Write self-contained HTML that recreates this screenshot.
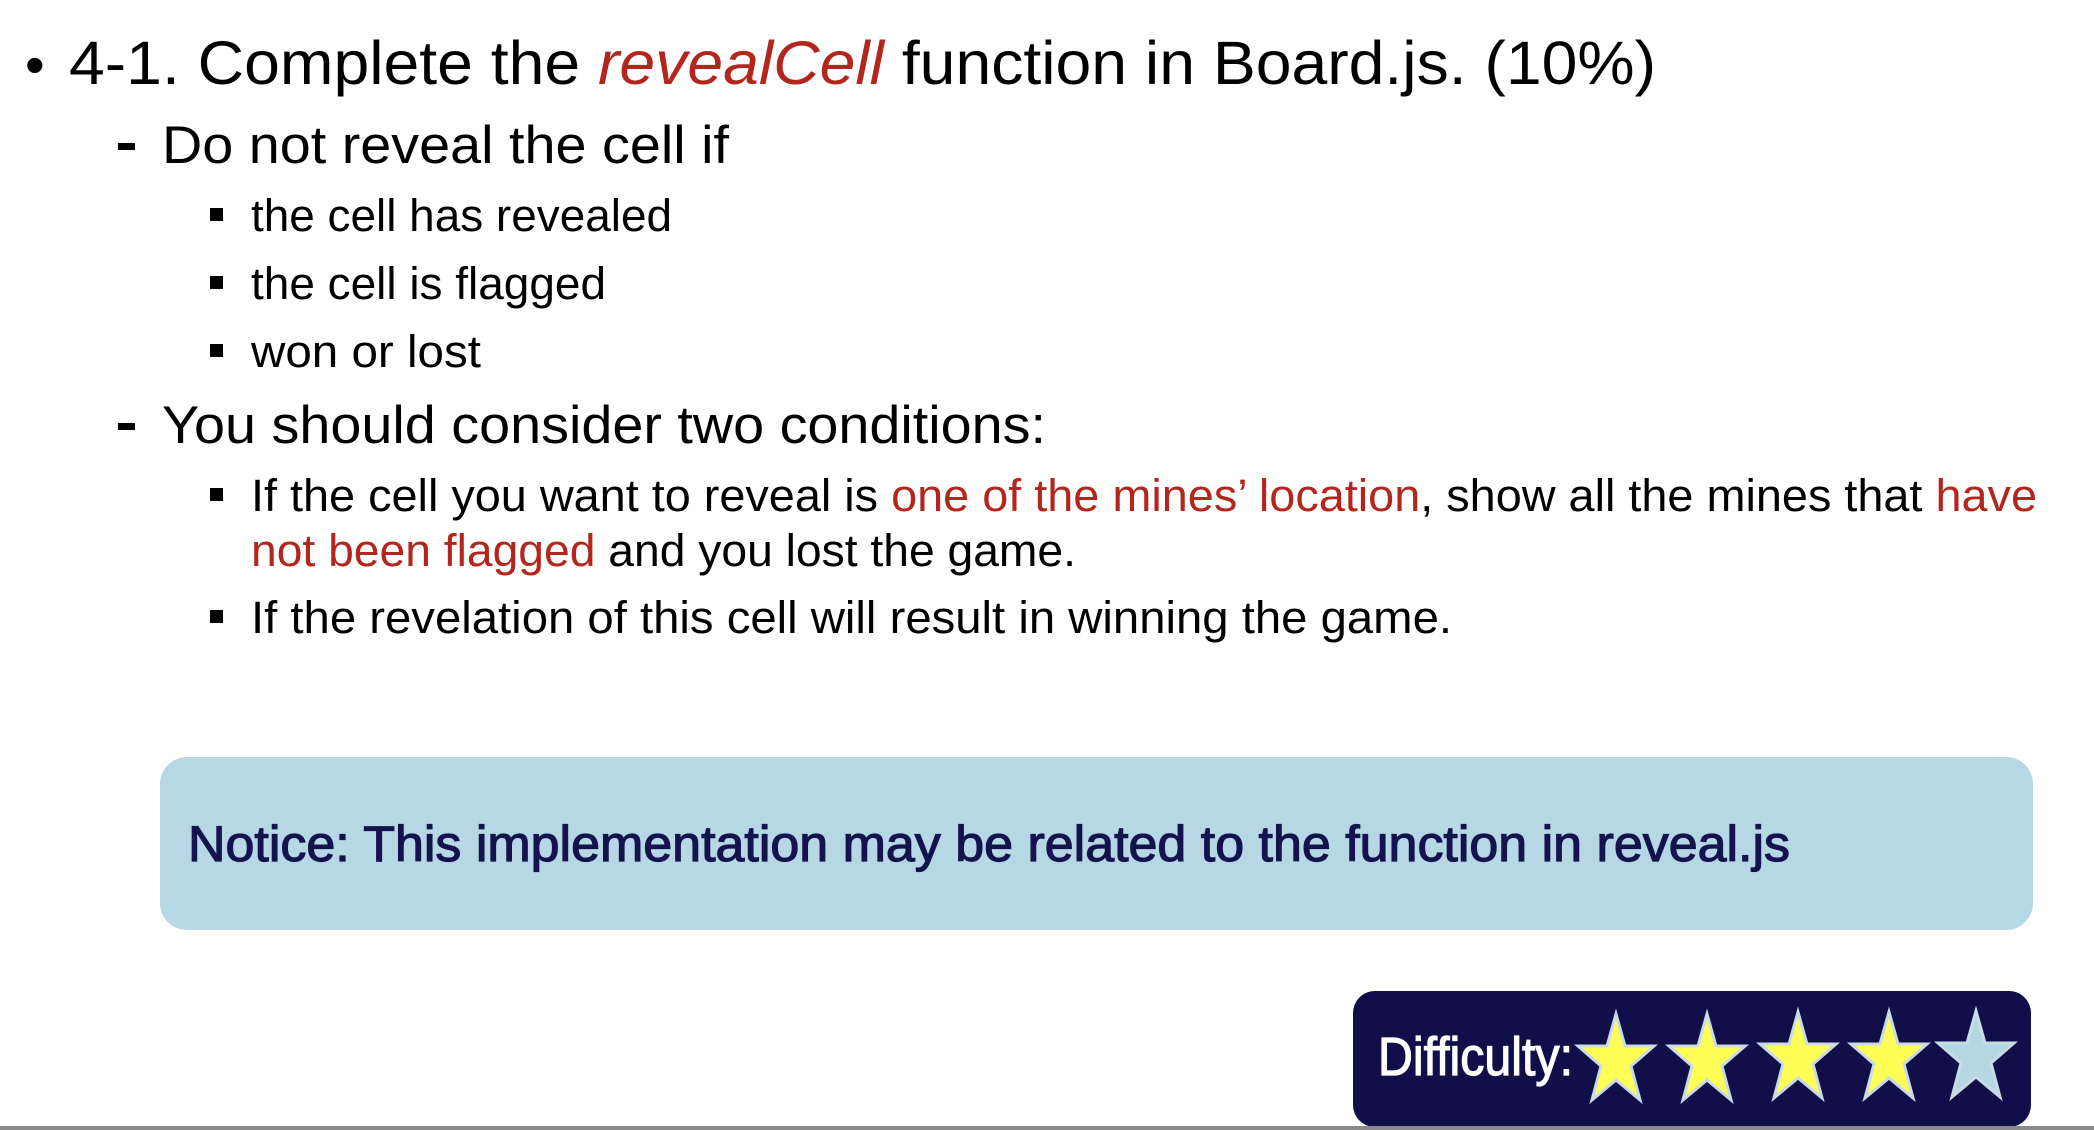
<!DOCTYPE html>
<html><head><meta charset="utf-8"><style>
html,body{margin:0;padding:0;background:#fff;width:2094px;height:1130px;overflow:hidden}
svg{display:block}
text{font-family:"Liberation Sans",sans-serif}
</style></head><body>
<svg width="2094" height="1130" viewBox="0 0 2094 1130" xmlns="http://www.w3.org/2000/svg">
<defs>
<polygon id="st" points="0,-46 9,-14 38,-14 15,6 24,40 0,20 -24,40 -15,6 -38,-14 -9,-14"/>
</defs>
<text x="25" y="84" font-size="56">•</text>
<text x="69" y="84" font-size="61" textLength="1587" lengthAdjust="spacingAndGlyphs">4-1. Complete the <tspan fill="#b3261e" font-style="italic">revealCell</tspan> function in Board.js. (10%)</text>
<rect x="118" y="143" width="17" height="7" fill="#000"/>
<text x="162" y="163" font-size="53" textLength="567" lengthAdjust="spacingAndGlyphs">Do not reveal the cell if</text>
<rect x="210" y="208" width="13" height="13" fill="#000"/>
<text x="251" y="231" font-size="45" textLength="421" lengthAdjust="spacingAndGlyphs">the cell has revealed</text>
<rect x="210" y="276" width="13" height="13" fill="#000"/>
<text x="251" y="299" font-size="45" textLength="355" lengthAdjust="spacingAndGlyphs">the cell is flagged</text>
<rect x="210" y="344" width="13" height="13" fill="#000"/>
<text x="251" y="367" font-size="45" textLength="230" lengthAdjust="spacingAndGlyphs">won or lost</text>
<rect x="118" y="423" width="17" height="7" fill="#000"/>
<text x="162" y="443" font-size="53" textLength="884" lengthAdjust="spacingAndGlyphs">You should consider two conditions:</text>
<rect x="210" y="488" width="13" height="13" fill="#000"/>
<text x="251" y="511" font-size="45" textLength="1786" lengthAdjust="spacingAndGlyphs">If the cell you want to reveal is <tspan fill="#b3261e">one of the mines’ location</tspan>, show all the mines that <tspan fill="#b3261e">have</tspan></text>
<text x="251" y="566" font-size="45" textLength="825" lengthAdjust="spacingAndGlyphs"><tspan fill="#b3261e">not been flagged</tspan> and you lost the game.</text>
<rect x="210" y="610" width="13" height="13" fill="#000"/>
<text x="251" y="633" font-size="45" textLength="1201" lengthAdjust="spacingAndGlyphs">If the revelation of this cell will result in winning the game.</text>
<rect x="160" y="757" width="1873" height="173" rx="27" fill="#b5d8e4"/>
<text x="188" y="861" font-size="50" fill="#15134d" stroke="#15134d" stroke-width="1.2" textLength="1602" lengthAdjust="spacingAndGlyphs">Notice: This implementation may be related to the function in reveal.js</text>
<rect x="1353" y="991" width="678" height="136" rx="22" fill="#110f4a"/>
<rect x="0" y="1126" width="2094" height="4" fill="#8a8a8a"/>
<text x="1378" y="1075" font-size="54" fill="#fff" stroke="#fff" stroke-width="1.2" textLength="195" lengthAdjust="spacingAndGlyphs">Difficulty:</text>
<g stroke="#c9dce6" stroke-width="3" stroke-linejoin="miter">
<use href="#st" x="1616" y="1060" fill="#ffff55"/>
<use href="#st" x="1707" y="1060" fill="#ffff55"/>
<use href="#st" x="1798" y="1058" fill="#ffff55"/>
<use href="#st" x="1889" y="1058" fill="#ffff55"/>
<use href="#st" x="1976" y="1057" fill="#b5d7e3"/>
</g>
</svg>
</body></html>
